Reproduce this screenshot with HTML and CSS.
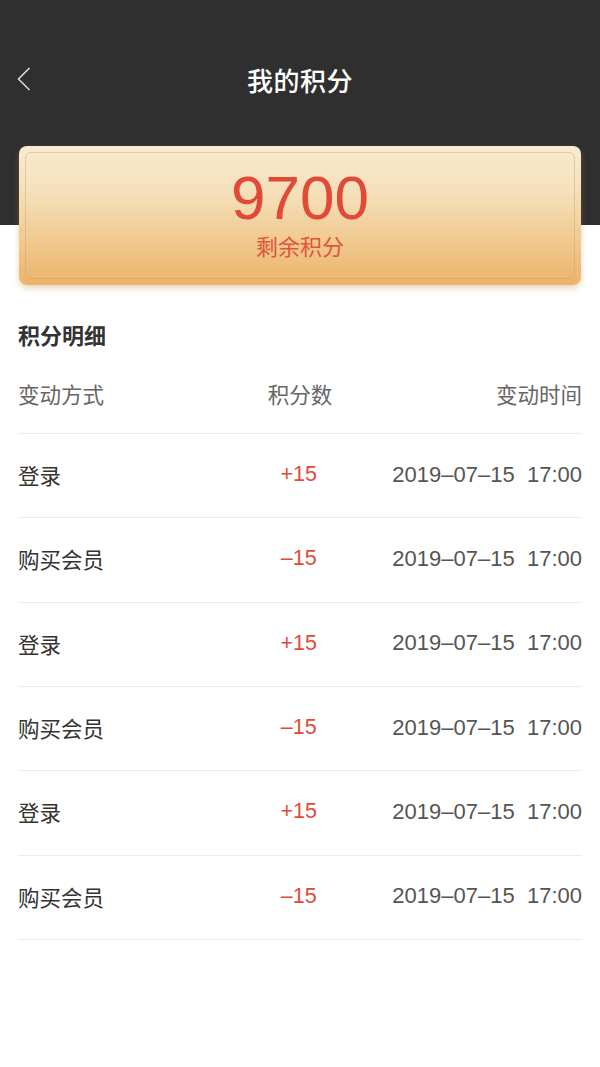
FILE: index.html
```html
<!DOCTYPE html>
<html>
<head>
  <meta charset="utf-8">
  <title>我的积分</title>
  <link rel="stylesheet" href="styles.css">
</head>

<body>
  <div class="nav-bar">
    <a class="back-btn" href="#">
      <svg width="14" height="24" viewBox="0 0 14 24">
        <polyline points="12.5,1 1.5,12 12.5,23" fill="none" stroke="#d8d8d8" stroke-width="1.6" stroke-linejoin="miter"/>
      </svg>
    </a>
    <h1 class="nav-title">我的积分</h1>
  </div>

  <div class="points-card">
    <div class="points-card-inner">
      <div class="points-value">9700</div>
      <div class="points-label">剩余积分</div>
    </div>
  </div>

  <div class="detail">
    <h2 class="detail-title">积分明细</h2>
    <div class="detail-head">
      <span class="col-type">变动方式</span>
      <span class="col-points">积分数</span>
      <span class="col-time">变动时间</span>
    </div>
    <div id="detail-list"></div>
  </div>

  <script>
    var records = [
      { type: "登录", points: 15, time: "2019–07–15  17:00" },
      { type: "购买会员", points: -15, time: "2019–07–15  17:00" },
      { type: "登录", points: 15, time: "2019–07–15  17:00" },
      { type: "购买会员", points: -15, time: "2019–07–15  17:00" },
      { type: "登录", points: 15, time: "2019–07–15  17:00" },
      { type: "购买会员", points: -15, time: "2019–07–15  17:00" }
    ];

    var list = document.getElementById("detail-list");
    var html = "";
    for (var i = 0; i < records.length; i++) {
      var r = records[i];
      var sign = r.points > 0 ? "+" : "–";
      html += "<div class=\"detail-row\">" +
        "<span class=\"col-type\">" + r.type + "</span>" +
        "<span class=\"col-points points-change\">" + sign + Math.abs(r.points) + "</span>" +
        "<span class=\"col-time time-text\">" + r.time + "</span>" +
        "</div>";
    }
    list.innerHTML = html;
  </script>
</body>
</html>
```

FILE: styles.css
```css
html {
  background: #fff;
}

body {
  margin: 0;
  min-height: 1067px;
  font-family: "Liberation Sans", "Noto Sans CJK SC", sans-serif;
  background: #fff linear-gradient(#2f2f2f, #2f2f2f) no-repeat;
  background-size: 100% 225px;
  color: #333;
}

.nav-bar {
  position: relative;
  height: 84px;
  padding-top: 40px;
  display: flex;
  align-items: center;
  justify-content: center;
}

.back-btn {
  position: absolute;
  left: 17px;
  top: 67px;
  display: block;
  width: 14px;
  height: 24px;
}

.back-btn svg {
  display: block;
}

.nav-title {
  margin: 0;
  font-size: 26px;
  font-weight: 500;
  line-height: 36px;
  color: #fff;
  letter-spacing: 0.5px;
}

.points-card {
  margin: 22px 19px 0 19px;
  height: 139px;
  padding: 6px;
  box-sizing: border-box;
  border-radius: 8px;
  background: linear-gradient(#f8ebd1 0%, #f5dfb8 35%, #f0c88e 70%, #ebb36b 100%);
  box-shadow: 0 3px 6px rgba(196, 135, 60, 0.35);
}

.points-card-inner {
  height: 100%;
  box-sizing: border-box;
  border: 1px solid rgba(214, 160, 90, 0.45);
  border-radius: 6px;
  padding-top: 14px;
  text-align: center;
}

.points-value {
  font-size: 62px;
  line-height: 62px;
  color: #e04a37;
}

.points-label {
  margin-top: 4px;
  font-size: 22px;
  line-height: 30px;
  color: #e0553d;
}

.detail {
  padding: 0 18px;
}

.detail-title {
  margin: 37px 0 4px 0;
  font-size: 22px;
  line-height: 30px;
  font-weight: bold;
  color: #333;
}

.detail-head,
.detail-row {
  display: grid;
  grid-template-columns: 1fr 1fr 1fr;
  align-items: center;
  font-size: 21.5px;
  border-bottom: 1px solid #ececec;
  white-space: nowrap;
}

.detail-head {
  height: 78px;
  box-sizing: border-box;
  padding-bottom: 2px;
  color: #666;
}

.detail-row {
  height: 84.33px;
  box-sizing: border-box;
  padding-bottom: 2px;
  color: #333;
}

.col-type {
  text-align: left;
}

.col-points {
  text-align: center;
}

.col-time {
  text-align: right;
}

.points-change {
  color: #e04a3a;
}

.time-text {
  color: #555;
  font-size: 22px;
  white-space: pre;
}
```
